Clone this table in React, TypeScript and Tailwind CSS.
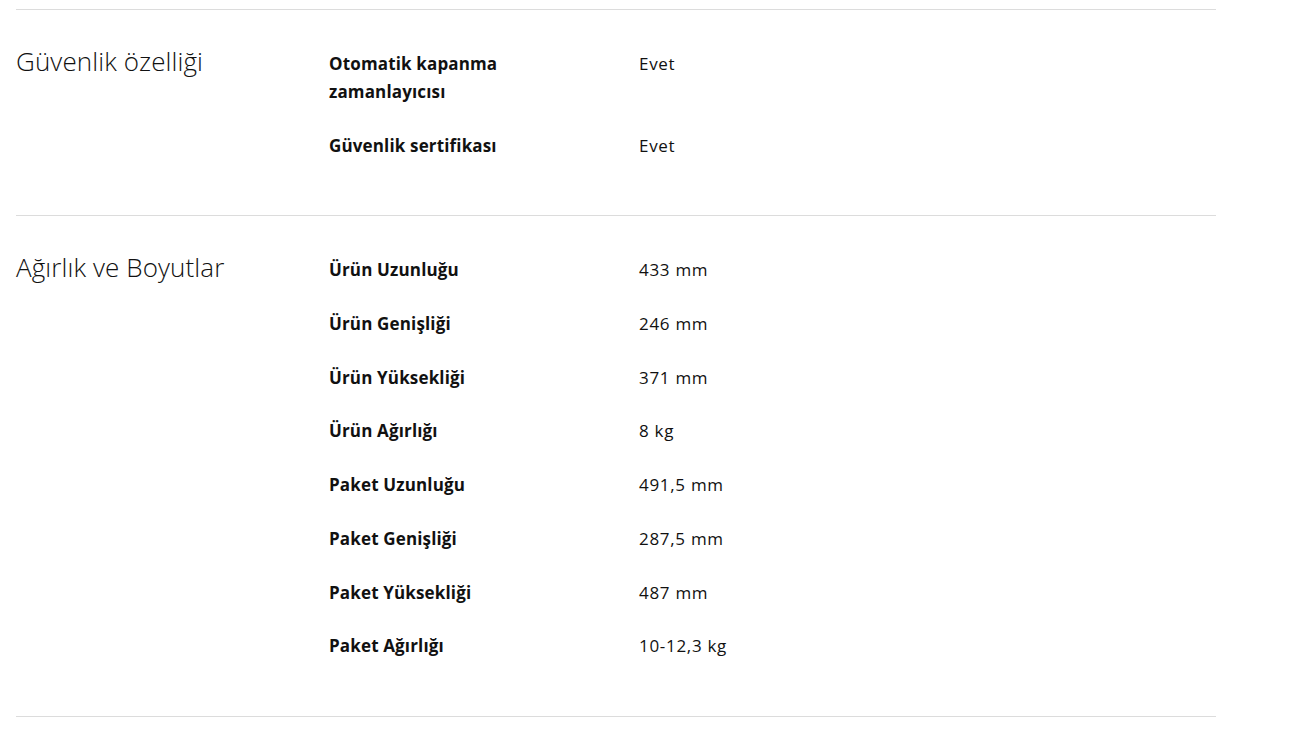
import React from 'react';

interface Spec {
  label: string;
  value: string;
}

interface Section {
  title: string;
  specs: Spec[];
}

const sections: Section[] = [
  {
    title: 'Güvenlik özelliği',
    specs: [
      { label: 'Otomatik kapanma zamanlayıcısı', value: 'Evet' },
      { label: 'Güvenlik sertifikası', value: 'Evet' },
    ],
  },
  {
    title: 'Ağırlık ve Boyutlar',
    specs: [
      { label: 'Ürün Uzunluğu', value: '433 mm' },
      { label: 'Ürün Genişliği', value: '246 mm' },
      { label: 'Ürün Yüksekliği', value: '371 mm' },
      { label: 'Ürün Ağırlığı', value: '8 kg' },
      { label: 'Paket Uzunluğu', value: '491,5 mm' },
      { label: 'Paket Genişliği', value: '287,5 mm' },
      { label: 'Paket Yüksekliği', value: '487 mm' },
      { label: 'Paket Ağırlığı', value: '10-12,3 kg' },
    ],
  },
];

export default function App() {
  return (
    <div className="min-h-screen bg-white text-[#111] font-['Open_Sans',sans-serif]">
      <div className="w-[1200px] ml-4 pt-[9px]">
        {sections.map((section) => (
          <div key={section.title} className="flex border-t border-[#dcdcdc] pt-10 pb-[30px]">
            {/* Section title */}
            <h2 className="w-[313px] shrink-0 text-[26px] font-light leading-[22px] tracking-[0.1px]">
              {section.title}
            </h2>

            {/* Spec rows */}
            <dl className="flex flex-col">
              {section.specs.map((spec) => (
                <div key={spec.label} className="flex mb-[25.7px] text-[17px] leading-[28px]">
                  <dt className="w-[310px] shrink-0 pr-[120px] font-bold tracking-[0.15px]">{spec.label}</dt>
                  <dd className="tracking-[0.7px]">{spec.value}</dd>
                </div>
              ))}
            </dl>
          </div>
        ))}
        <div className="border-t border-[#dcdcdc]" />
      </div>
    </div>
  );
}
